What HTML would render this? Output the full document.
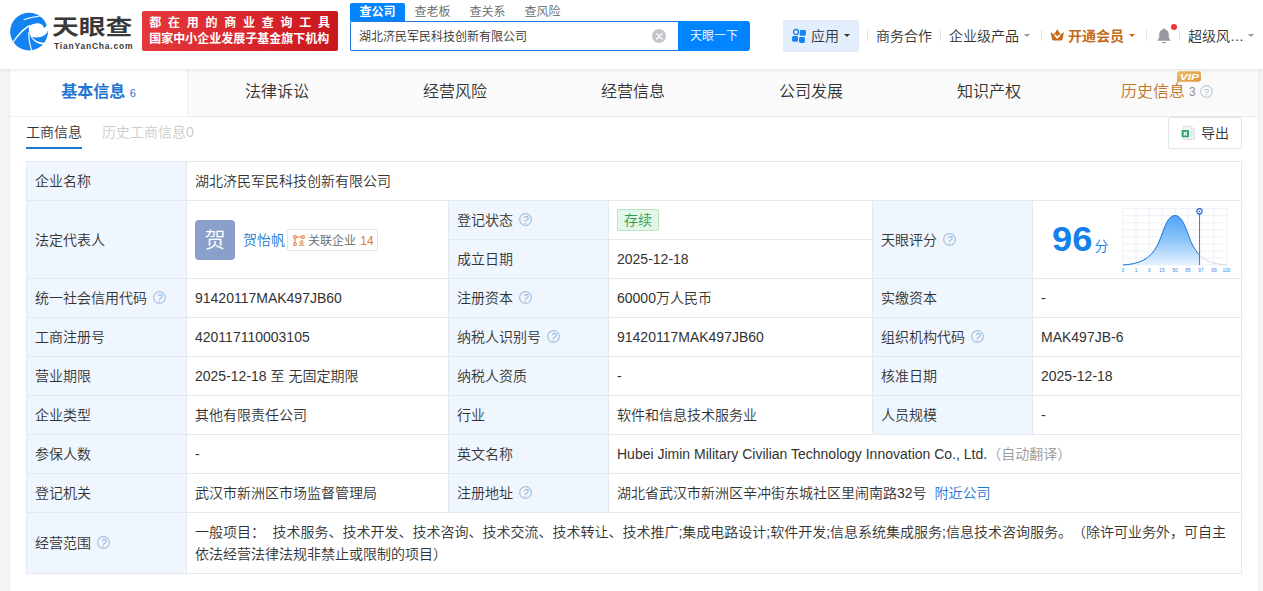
<!DOCTYPE html>
<html lang="zh-CN">
<head>
<meta charset="utf-8">
<title>湖北济民军民科技创新有限公司 - 天眼查</title>
<style>
*{box-sizing:border-box;margin:0;padding:0}
html,body{width:1263px;height:591px;overflow:hidden}
body{background:#f5f5f5;font-family:"Liberation Sans","Noto Sans CJK SC",sans-serif;font-size:14px;font-weight:350;color:#333;position:relative}
.abs{position:absolute;white-space:nowrap}
/* header */
#hd{position:absolute;left:0;top:0;width:1263px;height:69px;background:#fff;box-shadow:0 1px 4px rgba(0,0,0,.10);z-index:5}
#logo-cn{left:52.3px;top:13px;font-size:22.8px;line-height:30px;font-weight:700;color:#3b3838;transform:scale(1.175,.92);transform-origin:0 0}
#logo-en{left:54px;top:39.8px;font-size:8.5px;line-height:12px;font-weight:700;color:#3b3838;letter-spacing:.78px}
#banner{left:142px;top:11px;width:196px;height:40px;border-radius:2px;background:linear-gradient(100deg,#e5393d 0%,#d9262c 55%,#c9151c 100%);color:#fff;font-weight:700;font-size:12px}
#banner div{position:absolute;left:7.2px;white-space:nowrap;line-height:14px}
#b1{top:5.2px;letter-spacing:6.75px}
#b2{top:21px}
.stab{top:3px;width:55px;height:18px;line-height:19px;text-align:center;font-size:12px;color:#666}
.stab.on{background:#0084ff;color:#fff;font-weight:700;border-radius:2px 2px 0 0}
#sbox{left:350px;top:21px;width:330px;height:30px;border:1px solid #2279dc;border-right:none;border-radius:2px 0 0 2px;background:#fff;font-size:12px;line-height:30px;padding-left:8px;color:#333}
#sbtn{left:678px;top:21px;width:72px;height:30px;background:#0084ff;color:#fff;font-size:12px;line-height:30px;text-align:center;border-radius:0 3px 3px 0}
#sclr{left:651.6px;top:28.5px;width:14.6px;height:14.6px;border-radius:50%;background:#c3c5cb}
.nav{top:25.5px;font-size:14px;line-height:20px;color:#333}
.dv{top:30px;width:1px;height:11px;background:#e3e3e3}
.caret{width:0;height:0;border-left:3.5px solid transparent;border-right:3.5px solid transparent;border-top:3.5px solid #999}
/* container */
#wrap{position:absolute;left:10px;top:69px;width:1248px;height:522px;background:#fff;box-shadow:0 0 0 1px #ededed}
#tabs{position:absolute;left:0;top:0;width:1247px;height:48px;background:#fafafa;border-bottom:1px solid #ebebeb}
.tab{position:absolute;top:0;height:47px;width:178px;text-align:center;font-size:16px;line-height:46px;color:#333;white-space:nowrap}
.tab.on{background:#fff;color:#1e76d2;font-weight:700;height:48px;border-right:1px solid #f0f0f0;border-bottom:1px solid #f0f0f0}
.tab .n{font-size:11px;font-weight:400;position:relative;top:-.5px}
/* table */
table{position:absolute;left:16px;top:92px;width:1215px;border-collapse:collapse;table-layout:fixed}
td{text-spacing-trim:space-all;border:1px solid #e4e9f0;height:39px;padding:0 8px;font-size:14px;line-height:20px;color:#333;vertical-align:middle;white-space:nowrap}
td.l{background:#eff6fe;color:#333}
.q{display:inline-block;width:13px;height:13px;border-radius:50%;box-shadow:inset 0 0 0 1.25px #a9c1de;vertical-align:-1.6px;margin-left:6.2px;position:relative;top:-.5px}
.q::after{content:"?";position:absolute;left:0;top:0;width:13px;height:13px;line-height:16.4px;font-size:10px;font-weight:400;text-align:center;color:#8fafd4;overflow:visible;font-family:"Liberation Sans",sans-serif}
a{color:#1e76d2;text-decoration:none}
</style>
</head>
<body>
<div id="hd">
  <svg class="abs" style="left:9px;top:12px" width="40" height="40" viewBox="0 0 591 591">
    <circle cx="296" cy="290" r="279" fill="#1283f0"/>
    <g fill="#fff">
      <path d="M213 110 C290 80 370 66 452 56 L457 66 C376 80 300 96 222 122Z"/>
      <path d="M300 192 C210 236 118 338 60 438 L71 450 C136 353 224 258 316 207Z"/>
      <path d="M284 300 C281 400 300 490 328 566 L343 561 C314 480 299 400 302 300Z"/>
      <path d="M300 203 C350 172 425 155 472 176 C497 190 512 214 519 241 L556 194 L595 194 L595 272 L574 272 C560 330 500 372 400 376 C372 376 350 370 336 361 C378 424 452 456 524 452 L507 480 C425 478 352 436 314 345 C292 300 286 250 300 203Z"/>
    </g>
  </svg>
  <div id="logo-cn" class="abs">天眼查</div>
  <div id="logo-en" class="abs">TianYanCha.com</div>
  <div id="banner" class="abs"><div id="b1">都在用的商业查询工具</div><div id="b2">国家中小企业发展子基金旗下机构</div></div>

  <div class="abs stab on" style="left:350px">查公司</div>
  <div class="abs stab" style="left:405px">查老板</div>
  <div class="abs stab" style="left:460px">查关系</div>
  <div class="abs stab" style="left:515px">查风险</div>
  <div id="sbox" class="abs">湖北济民军民科技创新有限公司</div>
  <div id="sclr" class="abs"><svg width="14.6" height="14.6" viewBox="0 0 14.6 14.6" style="display:block;position:absolute;left:0;top:0"><path d="M4.6 4.6 L10 10 M10 4.6 L4.6 10" stroke="#fff" stroke-width="1.25" stroke-linecap="round" fill="none"/></svg></div>
  <div id="sbtn" class="abs">天眼一下</div>

  <div class="abs" style="left:783px;top:20px;width:76px;height:32px;background:#e2eefc;border-radius:2px"></div>
  <svg class="abs" style="left:792px;top:28px" width="15" height="16" viewBox="0 0 15 16">
    <circle cx="4" cy="4" r="2.5" fill="#e9f3ff" stroke="#1878e0" stroke-width="1.3"/>
    <rect x="7.8" y="2.1" width="6.1" height="5.7" rx="1.4" fill="#1283f0"/>
    <rect x="0.1" y="8" width="5.9" height="5.7" rx="1.4" fill="#1283f0"/>
    <rect x="7" y="9" width="5.9" height="5.9" rx="1.4" fill="#1283f0"/>
  </svg>
  <div class="abs nav" style="left:811px">应用</div>
  <div class="abs caret" style="left:844px;top:34px;border-top-color:#333"></div>
  <div class="abs dv" style="left:867px"></div>
  <div class="abs nav" style="left:876px">商务合作</div>
  <div class="abs dv" style="left:940px"></div>
  <div class="abs nav" style="left:949px">企业级产品</div>
  <div class="abs caret" style="left:1024px;top:34px"></div>
  <div class="abs dv" style="left:1041px"></div>
  <svg class="abs" style="left:1050px;top:29px" width="15" height="13" viewBox="0 0 15 13">
    <path d="M0.6 3.3 L3.9 5.4 L7.3 0.3 L10.7 5.4 L14 3.3 L12.5 10.5 Q12.3 11.6 11.3 11.6 L3.3 11.6 Q2.3 11.6 2.1 10.5Z" fill="#c8691a"/>
    <path d="M4.7 5.9 L7.3 8.7 L9.9 5.9" stroke="#fff" stroke-width="1.7" fill="none"/>
  </svg>
  <div class="abs nav" style="left:1068px;color:#c46a1a;font-weight:700">开通会员</div>
  <div class="abs caret" style="left:1129px;top:34px;border-top-color:#c46a1a"></div>
  <div class="abs dv" style="left:1146px"></div>
  <svg class="abs" style="left:1156.5px;top:28px" width="14" height="16" viewBox="0 0 14 16">
    <path d="M7 0.4 C7.7 0.4 8.2 0.9 8.2 1.6 C10.6 2.2 11.8 4.2 11.8 6.6 L11.8 10 L13.4 12 L13.4 12.8 L0.6 12.8 L0.6 12 L2.2 10 L2.2 6.6 C2.2 4.2 3.4 2.2 5.8 1.6 C5.8 0.9 6.3 0.4 7 0.4Z" fill="#96989e"/>
    <rect x="4.9" y="14" width="4.2" height="1.3" rx=".6" fill="#96989e"/>
  </svg>
  <div class="abs" style="left:1171px;top:23.5px;width:6.4px;height:6.4px;border-radius:50%;background:#f0323c"></div>
  <div class="abs dv" style="left:1179px"></div>
  <div class="abs nav" style="left:1188px">超级风…</div>
  <div class="abs caret" style="left:1248px;top:34px"></div>
</div>

<div id="wrap">
  <div id="tabs">
    <div class="tab on" style="left:0">基本信息 <span class="n">6</span></div>
    <div class="tab" style="left:178px">法律诉讼</div>
    <div class="tab" style="left:356px">经营风险</div>
    <div class="tab" style="left:534px">经营信息</div>
    <div class="tab" style="left:712px">公司发展</div>
    <div class="tab" style="left:890px">知识产权</div>
  </div>
  <div class="abs" style="left:1111px;top:12px;font-size:16px;line-height:22px;color:#c4752a">历史信息</div>
  <div class="abs" style="left:1179px;top:12.5px;font-size:12px;line-height:20px;color:#8d929b;font-weight:400">3</div>
  <svg class="abs" style="left:1190px;top:16.2px" width="13" height="13" viewBox="0 0 13 13"><circle cx="6.45" cy="6.45" r="5.8" fill="none" stroke="#bcc8d6" stroke-width="1.1"/><text x="6.45" y="9.7" font-family="Liberation Sans, sans-serif" font-size="9.5" fill="#a9b3bf" text-anchor="middle">?</text></svg>
  <svg class="abs" style="left:1167px;top:2px" width="25" height="14" viewBox="0 0 25 14">
    <defs><linearGradient id="vg" x1="0" y1="0" x2="1" y2="1"><stop offset="0" stop-color="#efc06e"/><stop offset="1" stop-color="#da9232"/></linearGradient></defs>
    <path d="M2.5 0.2 H21.4 Q23.9 0.2 23.9 2.7 V8.2 Q23.9 10.7 21.4 10.7 H2.6 L0 12.7 V2.7 Q0 0.2 2.5 0.2Z" fill="url(#vg)"/>
    <text x="2.8" y="8.8" font-family="Liberation Sans, sans-serif" font-size="9" font-weight="700" font-style="italic" fill="#fff" textLength="19.2" lengthAdjust="spacingAndGlyphs">VIP</text>
  </svg>

  <div class="abs" style="left:16px;top:53px;font-size:14px;line-height:20px;color:#333">工商信息</div>
  <div class="abs" style="left:16px;top:78px;width:56px;height:2px;background:#1e76d2"></div>
  <div class="abs" style="left:92px;top:53px;font-size:14px;line-height:20px;color:#ccc">历史工商信息0</div>

  <div class="abs" style="left:1158px;top:48px;width:74px;height:32px;border:1px solid #dfe3eb;border-radius:2px;background:#fff"></div>
  <svg class="abs" style="left:1171px;top:56px" width="14" height="15" viewBox="0 0 14 15">
    <path d="M2.6 1.3 L10.2 1.3 L13.4 4.4 L13.4 14.5 L2.6 14.5Z" fill="#f3f4f6" stroke="#d3d6dc" stroke-width=".8"/>
    <path d="M10.2 1.3 L10.2 4.4 L13.4 4.4" fill="#e4e6ea" stroke="#d3d6dc" stroke-width=".6"/>
    <rect x="0.6" y="5" width="7.4" height="7.2" rx=".7" fill="#2fa56c"/>
    <path d="M2.7 6.8 L5.9 10.5 M5.9 6.8 L2.7 10.5" stroke="#fff" stroke-width="1.15"/>
    <path d="M9.2 7.2h2.4 M9.2 9h2.4 M9.2 10.8h2.4" stroke="#b9dccb" stroke-width=".9"/>
  </svg>
  <div class="abs" style="left:1191px;top:54px;font-size:14px;line-height:20px;color:#333">导出</div>

  <table>
    <colgroup><col style="width:160px"><col style="width:262px"><col style="width:160px"><col style="width:264px"><col style="width:160px"><col style="width:209px"></colgroup>
    <tr><td class="l">企业名称</td><td colspan="5">湖北济民军民科技创新有限公司</td></tr>
    <tr>
      <td class="l" rowspan="2">法定代表人</td>
      <td rowspan="2" style="position:relative">
        <div class="abs" style="left:8px;top:19px;width:40px;height:40px;border-radius:4px;background:#8b9fcb;color:#fff;font-size:21px;line-height:39px;text-align:center">贺</div>
        <a class="abs" style="left:56px;top:29px;line-height:20px">贺怡帆</a>
        <div class="abs" style="left:99.5px;top:28px;width:91px;height:22px;border:1px solid #e1e4ea;border-radius:2px"></div>
        <svg class="abs" style="left:106px;top:33.5px" width="12" height="11" viewBox="0 0 12 11">
          <g fill="none" stroke="#e8804a" stroke-width="1.1"><circle cx="2" cy="2" r="1.4"/><circle cx="10" cy="2" r="1.4"/><circle cx="2" cy="9" r="1.4"/><path d="M3.4 2h5.2 M2 3.4v4.2"/><path d="M6 10.3h5.4 M8.7 6.2v4 M6.8 8.2h3.8 M6.3 7.3 L8.7 5.2 L11.2 7.3" stroke-width=".9"/></g>
        </svg>
        <div class="abs" style="left:121px;top:29.5px;font-size:12px;line-height:20px;color:#666">关联企业 <span style="color:#e07a30;margin-left:1px">14</span></div>
      </td>
      <td class="l">登记状态<i class="q"></i></td>
      <td><span style="display:inline-block;height:22px;line-height:20px;padding:0 6px;border:1px solid #b9e3c4;background:#e2f7e8;color:#2f9a50;border-radius:2px">存续</span></td>
      <td class="l" rowspan="2">天眼评分<i class="q"></i></td>
      <td rowspan="2" style="position:relative">
        <div class="abs" style="left:19px;top:18.3px;font-size:34.8px;line-height:40px;font-weight:700;color:#1380ec;transform:scaleX(1.04);transform-origin:0 50%;font-family:'Liberation Sans',sans-serif">96</div>
        <div class="abs" style="left:61.5px;top:35px;font-size:14px;line-height:20px;color:#1380ec">分</div>
        <svg class="abs" style="left:85px;top:3px" width="116" height="72" viewBox="0 0 116 72">
          <defs><linearGradient id="g1" x1="0" y1="0" x2="0" y2="1"><stop offset="0" stop-color="#4fa4f6"/><stop offset=".5" stop-color="#8ec5fa"/><stop offset="1" stop-color="#e6f2fe"/></linearGradient>
          <clipPath id="cp"><rect x="0" y="0" width="81.5" height="72"/></clipPath></defs>
          <g stroke="#e9eef7" stroke-width=".8" fill="none">
            <path d="M5 4.5h104 M5 11.6h104 M5 18.7h104 M5 25.8h104 M5 32.8h104 M5 39.9h104 M5 47h104 M5 54h104 M5 61h104"/>
            <path d="M5 4.5v56.5 M18 4.5v56.5 M31 4.5v56.5 M44 4.5v56.5 M57 4.5v56.5 M70 4.5v56.5 M83 4.5v56.5 M96 4.5v56.5 M109 4.5v56.5"/>
          </g>
          <path id="bell" d="M5 61 C22 60 32 55 39 42 C45 31 48 11.5 57 11.5 C66 11.5 69 31 75 42 C82 55 92 60 109 61" fill="none" stroke="#ccd3dc" stroke-width=".8"/>
          <g clip-path="url(#cp)">
            <path d="M5 61 C22 60 32 55 39 42 C45 31 48 11.5 57 11.5 C66 11.5 69 31 75 42 C82 55 92 60 109 61 Z" fill="url(#g1)"/>
            <path d="M5 61 C22 60 32 55 39 42 C45 31 48 11.5 57 11.5 C66 11.5 69 31 75 42 C82 55 92 60 109 61" fill="none" stroke="#1e78d8" stroke-width="1"/>
          </g>
          <path d="M81.5 9.5V61" stroke="#1e78d8" stroke-width=".9"/>
          <path d="M79.6 9 L81.5 12 L83.4 9Z" fill="#1e78d8"/><circle cx="81.5" cy="7.3" r="2.6" fill="#fff" stroke="#1e78d8" stroke-width="1.2"/>
          <circle cx="81.5" cy="7.3" r=".9" fill="#1e78d8"/>
          <g font-family="Liberation Sans, sans-serif" font-size="4.8" fill="#2f86e4" text-anchor="middle">
            <text x="5" y="68.3">0</text><text x="18" y="68.3">1</text><text x="31" y="68.3">3</text><text x="44" y="68.3">15</text><text x="57" y="68.3">50</text><text x="70" y="68.3">85</text><text x="83" y="68.3">97</text><text x="96" y="68.3">99</text><text x="108.5" y="68.3">100</text>
          </g>
        </svg>
      </td>
    </tr>
    <tr><td class="l">成立日期</td><td>2025-12-18</td></tr>
    <tr><td class="l">统一社会信用代码<i class="q"></i></td><td>91420117MAK497JB60</td><td class="l">注册资本<i class="q"></i></td><td>60000万人民币</td><td class="l">实缴资本</td><td>-</td></tr>
    <tr><td class="l">工商注册号</td><td>420117110003105</td><td class="l">纳税人识别号<i class="q"></i></td><td>91420117MAK497JB60</td><td class="l">组织机构代码<i class="q"></i></td><td>MAK497JB-6</td></tr>
    <tr><td class="l">营业期限</td><td>2025-12-18 至 无固定期限</td><td class="l">纳税人资质</td><td>-</td><td class="l">核准日期</td><td>2025-12-18</td></tr>
    <tr><td class="l">企业类型</td><td>其他有限责任公司</td><td class="l">行业</td><td>软件和信息技术服务业</td><td class="l">人员规模</td><td>-</td></tr>
    <tr><td class="l">参保人数</td><td>-</td><td class="l">英文名称</td><td colspan="3">Hubei Jimin Military Civilian Technology Innovation Co., Ltd.<span style="color:#999">（自动翻译）</span></td></tr>
    <tr><td class="l">登记机关</td><td>武汉市新洲区市场监督管理局</td><td class="l">注册地址<i class="q"></i></td><td colspan="3">湖北省武汉市新洲区辛冲街东城社区里闹南路32号<a style="margin-left:8px">附近公司</a></td></tr>
    <tr><td class="l" style="height:61px">经营范围<i class="q"></i></td><td colspan="5" style="white-space:nowrap;line-height:22px">一般项目：<span style="margin-left:3.5px"> </span>技术服务、技术开发、技术咨询、技术交流、技术转让、技术推广;集成电路设计;软件开发;信息系统集成服务;信息技术咨询服务。（除许可业务外，可自主<br>依法经营法律法规非禁止或限制的项目）</td></tr>
  </table>
</div>
</body>
</html>
